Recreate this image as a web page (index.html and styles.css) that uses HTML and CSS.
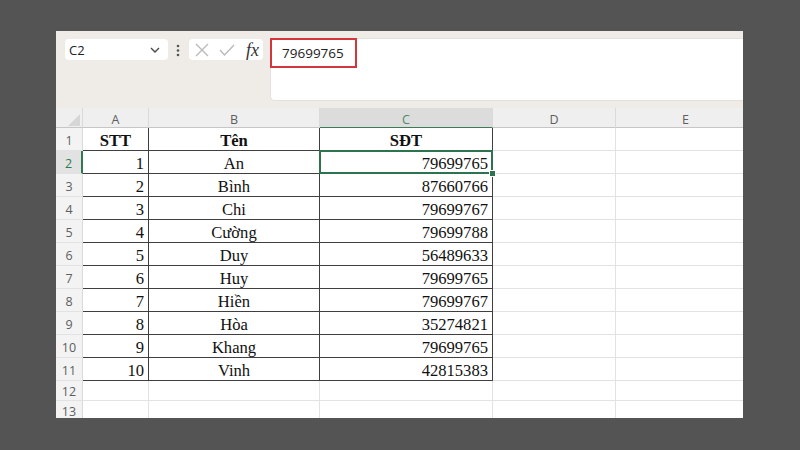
FILE: index.html
```html
<!DOCTYPE html>
<html lang="vi">
<head>
<meta charset="utf-8">
<title>Excel</title>
<link rel="stylesheet" href="styles.css">
</head>
<body>
<div class="window">
  <div class="toolbar">
    <div class="namebox">
      <span class="nb-text">C2</span>
      <svg class="chev" width="10" height="6" viewBox="0 0 10 6"><polyline points="1,1 5,5 9,1" fill="none" stroke="#444" stroke-width="1.3"/></svg>
    </div>
    <svg class="dots" width="4" height="13" viewBox="0 0 4 13"><circle cx="2" cy="2" r="1.3" fill="#555"/><circle cx="2" cy="6.5" r="1.3" fill="#555"/><circle cx="2" cy="11" r="1.3" fill="#555"/></svg>
    <div class="iconbox">
      <svg class="ic-x" width="14" height="14" viewBox="0 0 14 14"><path d="M1 1 L13 13 M13 1 L1 13" stroke="#b9b9b9" stroke-width="1.3" fill="none"/></svg>
      <svg class="ic-ok" width="16" height="12" viewBox="0 0 16 12"><polyline points="1,6 5.5,11 15,1" stroke="#b9b9b9" stroke-width="1.3" fill="none"/></svg>
      <span class="fx">fx</span>
    </div>
    <div class="fbar">
      <span class="fbar-text">79699765</span>
      <div class="highlight"></div>
    </div>
  </div>
  <div class="gap"></div>
  <div class="sheet">
    <div class="h corner"><span class="tri"></span></div>
    <div class="h">A</div>
    <div class="h">B</div>
    <div class="h hsel">C</div>
    <div class="h">D</div>
    <div class="h">E</div>

    <div class="rh">1</div>
    <div class="c d ctr b">STT</div>
    <div class="c d ctr b">Tên</div>
    <div class="c d ctr b">SĐT</div>
    <div class="c"></div><div class="c"></div>

    <div class="rh rsel">2</div>
    <div class="c d r">1</div>
    <div class="c d ctr">An</div>
    <div class="c d r sel">79699765<span class="selbox"></span><span class="handle"></span></div>
    <div class="c"></div><div class="c"></div>

    <div class="rh">3</div>
    <div class="c d r">2</div>
    <div class="c d ctr">Bình</div>
    <div class="c d r">87660766</div>
    <div class="c"></div><div class="c"></div>

    <div class="rh">4</div>
    <div class="c d r">3</div>
    <div class="c d ctr">Chi</div>
    <div class="c d r">79699767</div>
    <div class="c"></div><div class="c"></div>

    <div class="rh">5</div>
    <div class="c d r">4</div>
    <div class="c d ctr">Cường</div>
    <div class="c d r">79699788</div>
    <div class="c"></div><div class="c"></div>

    <div class="rh">6</div>
    <div class="c d r">5</div>
    <div class="c d ctr">Duy</div>
    <div class="c d r">56489633</div>
    <div class="c"></div><div class="c"></div>

    <div class="rh">7</div>
    <div class="c d r">6</div>
    <div class="c d ctr">Huy</div>
    <div class="c d r">79699765</div>
    <div class="c"></div><div class="c"></div>

    <div class="rh">8</div>
    <div class="c d r">7</div>
    <div class="c d ctr">Hiền</div>
    <div class="c d r">79699767</div>
    <div class="c"></div><div class="c"></div>

    <div class="rh">9</div>
    <div class="c d r">8</div>
    <div class="c d ctr">Hòa</div>
    <div class="c d r">35274821</div>
    <div class="c"></div><div class="c"></div>

    <div class="rh">10</div>
    <div class="c d r">9</div>
    <div class="c d ctr">Khang</div>
    <div class="c d r">79699765</div>
    <div class="c"></div><div class="c"></div>

    <div class="rh">11</div>
    <div class="c d r">10</div>
    <div class="c d ctr">Vinh</div>
    <div class="c d r">42815383</div>
    <div class="c"></div><div class="c"></div>

    <div class="rh short">12</div>
    <div class="c short"></div><div class="c short"></div><div class="c short"></div><div class="c short"></div><div class="c short"></div>

    <div class="rh short">13</div>
    <div class="c short"></div><div class="c short"></div><div class="c short"></div><div class="c short"></div><div class="c short"></div>
  </div>
</div>
</body>
</html>
```

FILE: styles.css
```css
html, body {
  margin: 0;
  padding: 0;
}
body {
  background: #545454;
  width: 800px;
  height: 450px;
  overflow: hidden;
  font-family: "Open Sans", "Noto Sans", sans-serif;
}
.window {
  margin: 31px 0 0 56px;
  width: 687px;
  height: 387px;
  background: #efece8;
  overflow: hidden;
}
.toolbar {
  display: flex;
  align-items: flex-start;
  height: 70px;
  padding-top: 7px;
  box-sizing: border-box;
}
.namebox {
  margin: 1px 0 0 9px;
  width: 103px;
  height: 21px;
  background: #fff;
  border-radius: 4px;
  display: flex;
  align-items: center;
  justify-content: space-between;
  padding: 0 8px 0 4px;
  box-sizing: border-box;
}
.nb-text {
  font-size: 13px;
  color: #222;
}
.chev {
  display: block;
}
.dots {
  display: block;
  margin: 6px 0 0 8px;
}
.iconbox {
  margin: 1px 0 0 9px;
  width: 74px;
  height: 21px;
  background: #fff;
  border-radius: 4px;
  display: flex;
  align-items: center;
  padding-left: 6px;
  box-sizing: border-box;
}
.ic-x {
  display: block;
}
.ic-ok {
  display: block;
  margin-left: 10px;
}
.fx {
  font-family: "Liberation Serif", serif;
  font-style: italic;
  font-size: 18px;
  color: #333;
  margin-left: 11px;
  line-height: 1;
}
.fbar {
  position: relative;
  margin-left: 7px;
  flex: 1;
  height: 63px;
  background: #fff;
  border-radius: 5px 0 0 5px;
  border: 1px solid #e4e0dc;
  border-right: none;
  box-sizing: border-box;
}
.fbar-text {
  display: block;
  padding: 5px 0 0 11px;
  font-size: 13.5px;
  line-height: 18px;
  color: #222;
}
.highlight {
  position: absolute;
  left: -1px;
  top: -1px;
  width: 87px;
  height: 30px;
  border: 2px solid #d4363c;
  box-sizing: border-box;
}
.gap {
  height: 7px;
}
.sheet {
  display: grid;
  grid-template-columns: 27px 66px 171px 173px 123px 140px;
  grid-template-rows: 20px repeat(11, 23px) 20px 20px;
  background: #fff;
}
.h {
  background: #efefef;
  border-right: 1px solid #dadada;
  border-bottom: 1px solid #c6c6c6;
  box-sizing: border-box;
  text-align: center;
  font-size: 12.5px;
  line-height: 19px;
  padding-top: 2px;
  color: #5e5e5e;
}
.corner {
  position: relative;
}
.tri {
  position: absolute;
  right: 2px;
  bottom: 1px;
  width: 0;
  height: 0;
  border-left: 12px solid transparent;
  border-bottom: 12px solid #d6d6d6;
}
.hsel {
  background: #dcdcdc;
  color: #4f8a67;
  border-bottom: 1px solid #3f7a58;
}
.rh {
  background: #f3f3f3;
  border-right: 1px solid #dadada;
  border-bottom: 1px solid #e2e2e2;
  box-sizing: border-box;
  text-align: center;
  font-size: 12.5px;
  line-height: 21px;
  padding-top: 2px;
  color: #5e5e5e;
}
.rh.short {
  line-height: 18px;
}
.rsel {
  background: #e2e2e2;
  color: #2f7a50;
  border-right: 2px solid #2f7a50;
}
.c {
  border-right: 1px solid #e2e2e2;
  border-bottom: 1px solid #e2e2e2;
  box-sizing: border-box;
  font-family: "Liberation Serif", "Times New Roman", serif;
  font-size: 16.6px;
  line-height: 20px;
  padding: 3px 4px 0 4px;
  color: #111;
  white-space: nowrap;
  overflow: visible;
}
.d {
  border-right-color: #3f3f3f;
  border-bottom-color: #3f3f3f;
}
.r {
  text-align: right;
}
.ctr {
  text-align: center;
}
.b {
  font-weight: bold;
}
.sel {
  position: relative;
}
.selbox {
  position: absolute;
  left: -1px;
  top: -1px;
  right: -1px;
  bottom: -1px;
  border: 2px solid #2e7350;
  pointer-events: none;
}
.handle {
  position: absolute;
  right: -4px;
  bottom: -4px;
  width: 5px;
  height: 5px;
  background: #2e7350;
  border: 1px solid #fff;
}
```
